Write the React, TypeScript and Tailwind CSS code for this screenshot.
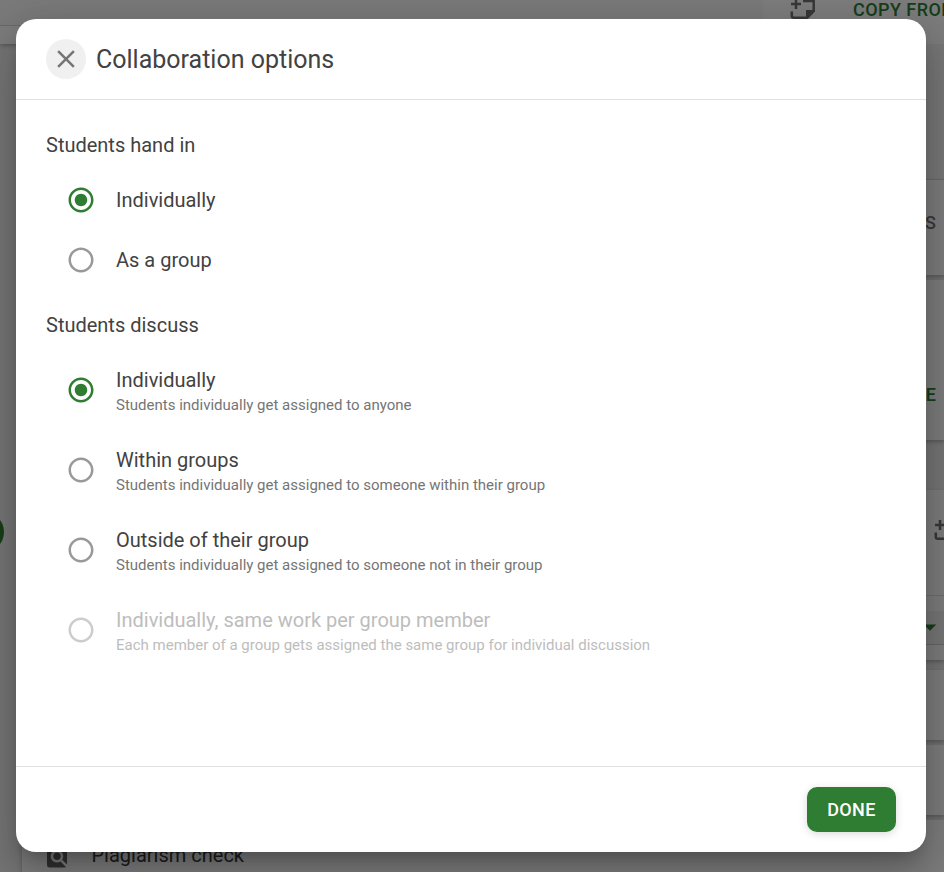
import { useState } from "react";
import { clsx } from "clsx";
import {
  MdArrowDropDown,
  MdClose,
  MdFindInPage,
  MdRadioButtonChecked,
  MdRadioButtonUnchecked,
} from "react-icons/md";

type Option = {
  value: string;
  label: string;
  description?: string;
  disabled?: boolean;
};

const handInOptions: Option[] = [
  { value: "individual", label: "Individually" },
  { value: "group", label: "As a group" },
];

const discussOptions: Option[] = [
  {
    value: "individual",
    label: "Individually",
    description: "Students individually get assigned to anyone",
  },
  {
    value: "within",
    label: "Within groups",
    description:
      "Students individually get assigned to someone within their group",
  },
  {
    value: "outside",
    label: "Outside of their group",
    description: "Students individually get assigned to someone not in their group",
  },
  {
    value: "same-work",
    label: "Individually, same work per group member",
    description:
      "Each member of a group gets assigned the same group for individual discussion",
    disabled: true,
  },
];

export default function App() {
  return (
    <div className="relative h-[872px] w-[944px] overflow-hidden font-['Roboto',sans-serif]">
      <AssignmentPage />
      <div className="absolute inset-0 flex items-start bg-black/50 px-4 pt-[19px]">
        <CollaborationDialog />
      </div>
    </div>
  );
}

function CollaborationDialog() {
  const [handIn, setHandIn] = useState("individual");
  const [discuss, setDiscuss] = useState("individual");

  return (
    <div
      role="dialog"
      className="flex h-[833px] w-[910px] flex-col rounded-[20px] bg-white text-[#424242] shadow-[0_11px_15px_-7px_rgba(0,0,0,0.2),0_24px_38px_3px_rgba(0,0,0,0.14),0_9px_46px_8px_rgba(0,0,0,0.12)]"
    >
      <header className="flex h-[81px] items-center gap-2.5 border-b border-[#e0e0e0] px-[30px]">
        <button
          aria-label="Close"
          className="flex size-10 items-center justify-center rounded-full bg-[#f0f0f0] text-[#757575]"
        >
          <MdClose size={30} />
        </button>
        <h2 className="pt-0.5 text-[25px] leading-[38px]">
          Collaboration options
        </h2>
      </header>

      <div className="flex grow flex-col gap-5 px-[30px] pt-[30px]">
        <RadioList
          title="Students hand in"
          options={handInOptions}
          value={handIn}
          onChange={setHandIn}
        />
        <RadioList
          title="Students discuss"
          options={discussOptions}
          value={discuss}
          onChange={setDiscuss}
        />
      </div>

      <footer className="flex h-[86px] items-center justify-end border-t border-[#e0e0e0] px-[30px]">
        <button className="h-[45px] w-[89px] rounded-[10px] bg-[#2e7d32] text-lg font-medium tracking-[0.02em] text-white shadow-[0_2px_8px_rgba(0,0,0,0.15)]">
          DONE
        </button>
      </footer>
    </div>
  );
}

type RadioListProps = {
  title: string;
  options: Option[];
  value: string;
  onChange: (value: string) => void;
};

function RadioList({ title, options, value, onChange }: RadioListProps) {
  return (
    <div>
      <h3 className="mb-2.5 text-xl leading-[30px]">{title}</h3>
      {options.map((option) => {
        const checked = option.value === value;
        const Icon = checked ? MdRadioButtonChecked : MdRadioButtonUnchecked;

        return (
          <button
            key={option.value}
            role="radio"
            aria-checked={checked}
            disabled={option.disabled}
            onClick={() => onChange(option.value)}
            className={clsx(
              "flex w-full items-center gap-5 pl-5 text-left",
              option.description ? "h-20" : "h-[60px]",
              option.disabled && "text-[#bdbdbd]",
            )}
          >
            <Icon
              size={30}
              className={clsx("shrink-0", {
                "text-[#2e7d32]": checked,
                "text-[#999999]": !checked && !option.disabled,
                "text-[#cccccc]": option.disabled,
              })}
            />
            <span>
              <span className="block text-xl leading-[30px]">
                {option.label}
              </span>
              {option.description && (
                <span
                  className={clsx(
                    "block text-[15px] leading-5",
                    !option.disabled && "text-[#757575]",
                  )}
                >
                  {option.description}
                </span>
              )}
            </span>
          </button>
        );
      })}
    </div>
  );
}

// The page under the dialog, only its edges are visible
function AssignmentPage() {
  return (
    <div className="flex h-full flex-col bg-[#ececec] text-[#3c3c3c]">
      <div className="flex h-11 shrink-0 bg-[#fafafa] shadow-[0_2px_4px_rgba(0,0,0,0.25)]">
        <div className="h-[26px] grow border-b border-[#d4d4d4] bg-[#f4f4f4]" />
        <div className="flex w-[181px] items-start">
          <AddNoteIcon className="-mt-[7px] ml-[27px] shrink-0" />
          <span className="-mt-1 ml-[37px] text-lg font-medium tracking-[0.025em] whitespace-nowrap text-[#2e7d32]">
            COPY FROM
          </span>
        </div>
      </div>

      <div className="flex grow">
        <div className="w-[22px] shrink-0 pt-[468px]">
          <div className="-ml-[36px] size-10 rounded-full bg-[#2e7d32]" />
        </div>
        <div className="flex grow flex-col">
          <div className="h-[136px] border-b border-[#d8d8d8] bg-[#f0f0f0]" />
          <Card className="flex h-[95px] items-center justify-end pr-2 text-lg font-medium text-[#757575]">
            <span className="-mt-2.5">S</span>
          </Card>
          <Card className="mt-[5px] flex h-40 items-end justify-end pr-2 pb-[31px] text-lg font-medium text-[#2e7d32]">
            E
          </Card>
          <Card className="mt-[50px] h-[170px]">
            <div className="flex h-[106px] justify-end border-b border-[#dcdcdc] pt-[24px]">
              <AddNoteIcon className="-mr-4" />
            </div>
            <div className="h-[15px]" />
            <div className="flex h-[34px] items-center justify-end border-b border-[#cccccc] bg-[#efefef]">
              <MdArrowDropDown
                size={30}
                className="-mr-[1px] mb-0.5 text-[#2e7d32]"
              />
            </div>
          </Card>
          <Card className="mt-2.5 h-[70px]" />
          <Card className="mt-[5px] h-[70px]" />
          <Card className="mt-[5px] flex h-[70px] items-center gap-5 pl-[19.5px] text-xl">
            <MdFindInPage size={30} className="text-[#616161]" />
            <span>Plagiarism check</span>
          </Card>
        </div>
      </div>
    </div>
  );
}

function Card({
  className,
  children,
}: {
  className?: string;
  children?: React.ReactNode;
}) {
  return (
    <div
      className={clsx(
        "shrink-0 bg-[#fafafa] shadow-[0_2px_4px_rgba(0,0,0,0.25)]",
        className,
      )}
    >
      {children}
    </div>
  );
}

function AddNoteIcon({ className }: { className?: string }) {
  return (
    <svg
      viewBox="0 0 26 26"
      className={clsx("h-[26px] w-[26px] text-[#707070]", className)}
      fill="none"
      stroke="currentColor"
      strokeWidth="2.5"
    >
      <path d="M6 6v10M1 11h10" />
      <path d="M13 8h10.7v10l-6.5 6.7H3.8a2 2 0 0 1-2-2V18.500" />
      <path d="M25 17v1l-8 8h-1v-9z" fill="currentColor" stroke="none" />
    </svg>
  );
}
